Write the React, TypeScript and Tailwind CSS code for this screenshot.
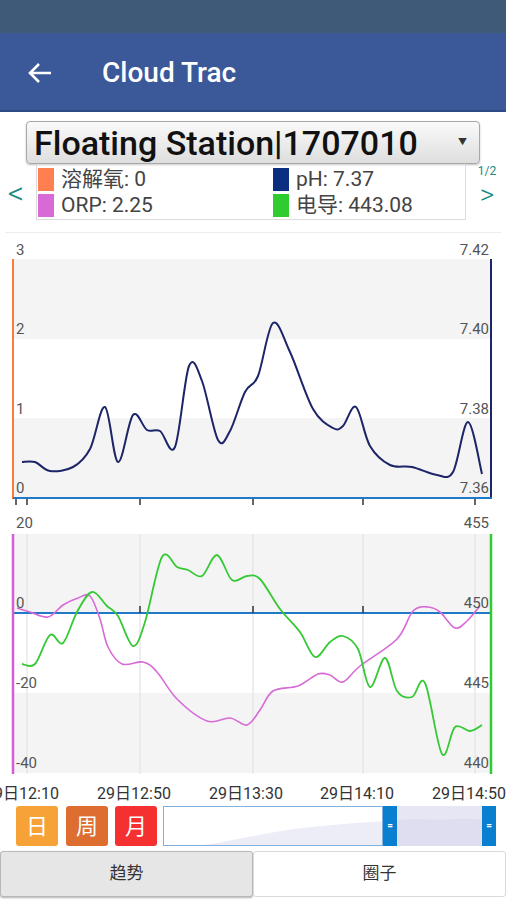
import React from "react";

type Pt = [number, number];

// catmull-rom -> cubic bezier, points are page coords, dy shifts into svg coords
function smooth(pts: Pt[], dy: number) {
  const p = pts.map(([x, y]) => [x, y - dy] as Pt);
  let d = `M${p[0][0]},${p[0][1]}`;
  for (let i = 0; i < p.length - 1; i++) {
    const p0 = p[i - 1] || p[i];
    const p1 = p[i];
    const p2 = p[i + 1];
    const p3 = p[i + 2] || p2;
    const c1x = p1[0] + (p2[0] - p0[0]) / 6;
    const c1y = p1[1] + (p2[1] - p0[1]) / 6;
    const c2x = p2[0] - (p3[0] - p1[0]) / 6;
    const c2y = p2[1] - (p3[1] - p1[1]) / 6;
    d += ` C${c1x.toFixed(1)},${c1y.toFixed(1)} ${c2x.toFixed(1)},${c2y.toFixed(1)} ${p2[0]},${p2[1]}`;
  }
  return d;
}

const phLine: Pt[] = [
  [22, 463], [35, 463], [50, 472], [73, 468], [90, 450], [105, 408], [118, 463],
  [133, 416], [147, 431], [160, 432], [175, 448], [189, 367], [202, 382], [218, 441],
  [230, 432], [245, 393], [258, 377], [273, 324], [290, 353], [313, 410], [333, 429],
  [343, 427], [356, 408], [370, 447], [390, 466], [412, 468], [437, 476], [453, 473],
  [468, 423], [482, 475],
];

const condLine: Pt[] = [
  [22, 665], [35, 665], [50, 636], [63, 644], [77, 613], [92, 593], [107, 607],
  [118, 617], [133, 647], [145, 623], [162, 558], [177, 568], [188, 571], [202, 577],
  [217, 556], [232, 581], [247, 577], [260, 580], [280, 610], [300, 633], [315, 658],
  [330, 643], [343, 637], [358, 650], [370, 688], [385, 659], [397, 692], [412, 698],
  [425, 684], [442, 755], [455, 728], [470, 732], [482, 726],
];

const orpLine: Pt[] = [
  [17, 609], [30, 613], [48, 618], [63, 606], [78, 599], [90, 597], [100, 620],
  [108, 648], [122, 665], [143, 663], [157, 673], [177, 700], [207, 722], [230, 719],
  [247, 726], [260, 711], [273, 692], [298, 687], [318, 675], [330, 676], [343, 683],
  [360, 667], [397, 640], [413, 612], [428, 608], [440, 613], [455, 629], [467, 622],
  [480, 607],
];

const legend = [
  { color: "bg-[#ff7f50]", label: "溶解氧: 0" },
  { color: "bg-[#0b2f80]", label: "pH: 7.37" },
  { color: "bg-[#d86ad8]", label: "ORP: 2.25" },
  { color: "bg-[#2ecc2e]", label: "电导: 443.08" },
];

function TopChart() {
  const o = 234;
  return (
    <svg width="506" height="274" className="block" fontSize="15" fontFamily="Roboto, 'Noto Sans CJK SC', sans-serif">
      <rect x="13" y={260 - o} width="478" height="80" fill="#f4f4f4" />
      <rect x="13" y={419 - o} width="478" height="79" fill="#f4f4f4" />
      <path d={smooth(phLine, o)} fill="none" stroke="#1b2568" strokeWidth="2" />
      <line x1="13" y1={260 - o} x2="13" y2={500 - o} stroke="#ff7a3a" strokeWidth="2" />
      <line x1="491" y1={260 - o} x2="491" y2={500 - o} stroke="#1b2568" strokeWidth="2" />
      <line x1="13" y1={499 - o} x2="492" y2={499 - o} stroke="#1f78c8" strokeWidth="2" />
      {[16, 27, 140, 253, 363, 475].map((x) => (
        <line key={x} x1={x} y1={500 - o} x2={x} y2={506 - o} stroke="#333" strokeWidth="1.5" />
      ))}
      <g fill="#555">
        <text x="16" y="22">3</text>
        <text x="16" y="101">2</text>
        <text x="16" y="181">1</text>
        <text x="16" y="260">0</text>
      </g>
      <g fill="#555" textAnchor="end">
        <text x="489" y="22">7.42</text>
        <text x="489" y="101">7.40</text>
        <text x="489" y="181">7.38</text>
        <text x="489" y="260">7.36</text>
      </g>
    </svg>
  );
}

function BottomChart() {
  const o = 508;
  return (
    <svg width="506" height="297" className="block" fontSize="15" fontFamily="Roboto, 'Noto Sans CJK SC', sans-serif">
      <rect x="13" y={535 - o} width="478" height="79" fill="#f4f4f4" />
      <rect x="13" y={694 - o} width="478" height="80" fill="#f4f4f4" />
      {[27, 140, 253, 363, 475].map((x) => (
        <line key={x} x1={x} y1={535 - o} x2={x} y2={775 - o} stroke="#e3e3e3" strokeWidth="1.2" />
      ))}
      <line x1="13" y1={614 - o} x2="492" y2={614 - o} stroke="#1f78c8" strokeWidth="2" />
      {[140, 253, 363].map((x) => (
        <line key={x} x1={x} y1={607 - o} x2={x} y2={614 - o} stroke="#333" strokeWidth="1.5" />
      ))}
      <path d={smooth(orpLine, o)} fill="none" stroke="#d86ad8" strokeWidth="1.6" />
      <path d={smooth(condLine, o)} fill="none" stroke="#35c935" strokeWidth="1.8" />
      <line x1="13" y1={535 - o} x2="13" y2={775 - o} stroke="#d35fd3" strokeWidth="2.5" />
      <line x1="491" y1={535 - o} x2="491" y2={775 - o} stroke="#2ecc2e" strokeWidth="2.5" />
      <g fill="#555">
        <text x="16" y="21">20</text>
        <text x="16" y="101">0</text>
        <text x="16" y="181">-20</text>
        <text x="16" y="261">-40</text>
      </g>
      <g fill="#555" textAnchor="end">
        <text x="489" y="21">455</text>
        <text x="489" y="101">450</text>
        <text x="489" y="181">445</text>
        <text x="489" y="261">440</text>
      </g>
      <g fill="#333" textAnchor="middle" fontSize="16">
        <text x="22" y="292">29日12:10</text>
        <text x="134" y="292">29日12:50</text>
        <text x="246" y="292">29日13:30</text>
        <text x="357" y="292">29日14:10</text>
        <text x="469" y="292">29日14:50</text>
      </g>
    </svg>
  );
}

function Handle() {
  return (
    <div className="flex w-[14px] items-center justify-center bg-[#0a7fd0]">
      <span className="text-[10px] font-bold leading-none text-white">=</span>
    </div>
  );
}

export default function App() {
  return (
    <div className="flex h-[900px] w-[506px] flex-col overflow-hidden bg-white font-['Roboto','Noto_Sans_CJK_SC',sans-serif]">
      <div className="h-[33px] bg-[#3e5a78]" />
      <div className="flex h-[79px] items-center border-b-2 border-[#2c4a86] bg-[#3b5898] pt-[3px] text-white">
        <svg width="26" height="22" viewBox="0 0 26 22" className="ml-[27px]">
          <path d="M24 11H3M12 2L3 11l9 9" fill="none" stroke="white" strokeWidth="2.6" />
        </svg>
        <span className="ml-[49px] text-[28px] font-medium leading-none">Cloud Trac</span>
      </div>

      <div className="mt-[9px] px-[26px]">
        <div className="flex h-[43px] items-center justify-between rounded-sm border border-[#a8a8a8] bg-gradient-to-b from-[#fafafa] to-[#dedede] pl-[7px] pr-[12px] shadow-[0_1px_2px_rgba(0,0,0,0.25)]">
          <span className="text-[34px] font-medium leading-none text-[#111]">Floating Station|1707010</span>
          <span className="text-[9px] text-[#333]">▼</span>
        </div>
      </div>

      <div className="flex h-[56px]">
        <div className="flex w-[36px] items-center justify-center pr-[4px] pt-[2px] text-[32px] font-light leading-none text-[#168a84]">&lt;</div>
        <div className="grid w-[430px] grid-cols-[235px_1fr] content-center gap-y-[2px] border border-[#dcdcdc] pl-[1px]">
          {legend.map((l) => (
            <div key={l.label} className="flex h-[24px] items-center gap-[7px]">
              <div className={`h-[23px] w-[16px] ${l.color}`} />
              <span className="text-[21px] leading-none text-[#444]">{l.label}</span>
            </div>
          ))}
        </div>
        <div className="flex flex-1 flex-col items-center pl-[2px]">
          <span className="mt-[1px] text-[12px] leading-[12px] text-[#168a84]">1/2</span>
          <span className="mt-[4px] text-[28px] font-light leading-[28px] text-[#168a84]">&gt;</span>
        </div>
      </div>

      <div className="mx-[5px] mt-[12px] h-px bg-[#ececec]" />

      <TopChart />
      <BottomChart />

      <div className="mt-[2px] flex h-[40px] px-[16px] pr-[10px]">
        <div className="flex w-[42px] items-center justify-center rounded-[3px] bg-[#f7a236] text-[22px] text-white">日</div>
        <div className="ml-[8px] flex w-[42px] items-center justify-center rounded-[3px] bg-[#dd6e2f] text-[22px] text-white">周</div>
        <div className="ml-[7px] flex w-[42px] items-center justify-center rounded-[3px] bg-[#f43030] text-[22px] text-white">月</div>
        <div className="ml-[6px] flex flex-1">
          <div className="relative flex-1 overflow-hidden border border-[#7fb0e0] bg-white">
            <svg width="220" height="40" className="absolute bottom-0 left-0" viewBox="0 0 220 40">
              <path d="M40,40 C70,36 100,28 130,24 C160,20 190,18 220,16 L220,40 Z" fill="#ededf8" />
            </svg>
          </div>
          <Handle />
          <div className="relative w-[85px] overflow-hidden bg-[#e6e6f4]">
            <svg width="85" height="40" className="absolute bottom-0 left-0" viewBox="0 0 85 40">
              <path d="M0,14 C20,12 40,15 60,13 C70,12 80,14 85,13 L85,40 L0,40 Z" fill="#dedef0" />
            </svg>
          </div>
          <Handle />
        </div>
      </div>

      <div className="mt-[5px] flex h-[46px]">
        <div className="flex w-[253px] items-center justify-center rounded-[3px] border border-[#b8b8b8] bg-[#e6e6e6] text-[17px] text-[#333] shadow-[0_1px_2px_rgba(0,0,0,0.3)]">趋势</div>
        <div className="flex flex-1 items-center justify-center rounded-[3px] border border-[#dadada] bg-white text-[17px] text-[#333]">圈子</div>
      </div>
    </div>
  );
}
